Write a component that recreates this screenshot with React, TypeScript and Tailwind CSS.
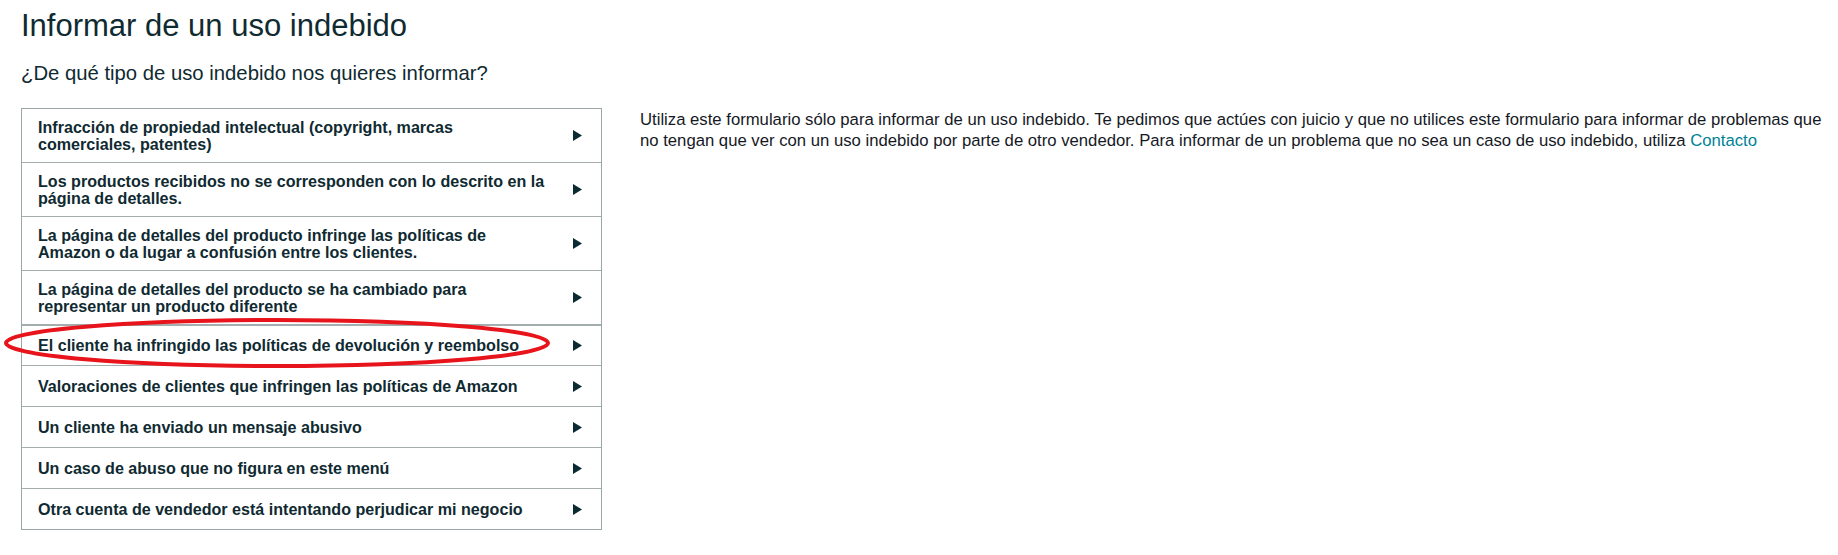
import React from 'react';

type AbuseOption = {
  id: string;
  lines: string[];
  thickTop?: boolean;
};

const OPTIONS: AbuseOption[] = [
  {
    id: 'ip',
    lines: ['Infracción de propiedad intelectual (copyright, marcas', 'comerciales, patentes)'],
  },
  {
    id: 'not-as-described',
    lines: ['Los productos recibidos no se corresponden con lo descrito en la', 'página de detalles.'],
  },
  {
    id: 'detail-page-policy',
    lines: ['La página de detalles del producto infringe las políticas de', 'Amazon o da lugar a confusión entre los clientes.'],
  },
  {
    id: 'detail-page-changed',
    lines: ['La página de detalles del producto se ha cambiado para', 'representar un producto diferente'],
  },
  {
    id: 'returns',
    lines: ['El cliente ha infringido las políticas de devolución y reembolso'],
    thickTop: true,
  },
  { id: 'reviews', lines: ['Valoraciones de clientes que infringen las políticas de Amazon'] },
  { id: 'abusive-message', lines: ['Un cliente ha enviado un mensaje abusivo'] },
  { id: 'other', lines: ['Un caso de abuso que no figura en este menú'] },
  { id: 'seller', lines: ['Otra cuenta de vendedor está intentando perjudicar mi negocio'] },
];

const FONT = { fontFamily: '"Liberation Sans", Arial, sans-serif' };

const Caret = () => (
  <svg width="9" height="11" viewBox="0 0 9 11" className="shrink-0">
    <path d="M0 0 L9 5.5 L0 11 Z" fill="#0b2a31" />
  </svg>
);

const OptionRow: React.FC<{ option: AbuseOption; first: boolean }> = ({ option, first }) => (
  <button
    type="button"
    className={`flex w-full min-h-[41px] items-center justify-between pl-4 pr-[19px] py-[9.5px] text-left cursor-pointer hover:bg-[#f3f5f5] ${
      first ? '' : option.thickTop ? 'border-t-2 border-[#a4aeae]' : 'border-t border-[#a4aeae]'
    }`}
  >
    <span className="text-[16.1px] leading-[17px] font-bold text-[#0f2a31]">
      {option.lines.map((line, i) => (
        <React.Fragment key={i}>
          {i > 0 && <br />}
          {line}
        </React.Fragment>
      ))}
    </span>
    <Caret />
  </button>
);

export default function App() {
  return (
    <div className="relative min-h-[555px] bg-white px-[21px] pt-[8px]" style={FONT}>
      <h1 className="text-[31px] leading-[36px] text-[#0f2a31]">Informar de un uso indebido</h1>
      <h2 className="mt-[15px] text-[20.3px] leading-[28px] text-[#0f2a31]">
        ¿De qué tipo de uso indebido nos quieres informar?
      </h2>

      <div className="mt-[21px] flex items-start gap-[38px]">
        {/* Abuse type list */}
        <div className="w-[581px] shrink-0 border border-[#9aa6a7]">
          {OPTIONS.map((opt, i) => (
            <OptionRow key={opt.id} option={opt} first={i === 0} />
          ))}
        </div>

        {/* Help text */}
        <p className="pt-px text-[16.7px] leading-[21px] text-[#16191f] whitespace-nowrap">
          Utiliza este formulario sólo para informar de un uso indebido. Te pedimos que actúes con juicio y que no
          utilices este formulario para informar de problemas que
          <br />
          no tengan que ver con un uso indebido por parte de otro vendedor. Para informar de un problema que no sea un
          caso de uso indebido, utiliza <a className="text-[#008296] hover:underline cursor-pointer">Contacto</a>
        </p>
      </div>

      {/* red annotation */}
      <svg className="pointer-events-none absolute left-0 top-0" width="600" height="400">
        <ellipse cx="277" cy="343" rx="271" ry="23" fill="none" stroke="#e8141c" strokeWidth="4" />
      </svg>
    </div>
  );
}
